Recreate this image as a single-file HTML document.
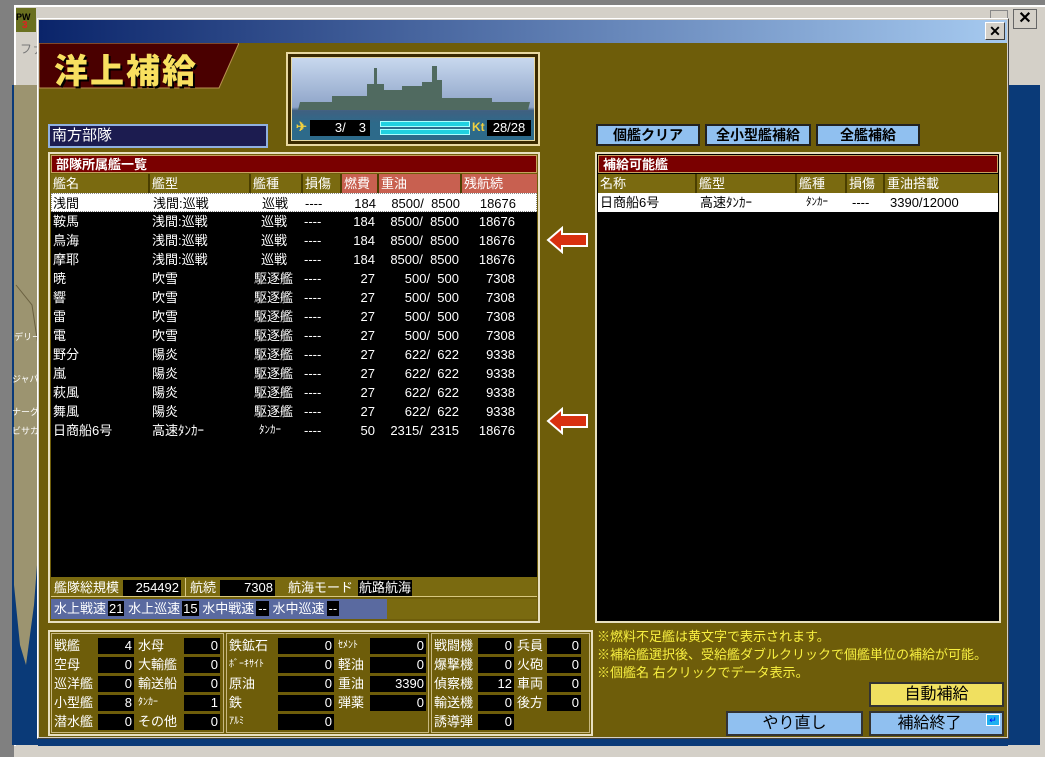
<!DOCTYPE html>
<html><head><meta charset="utf-8"><style>
*{margin:0;padding:0;box-sizing:border-box}
body{width:1045px;height:757px;overflow:hidden;background:#c0c0c0;font-family:"Liberation Sans","Noto Sans CJK JP",sans-serif;font-size:13px;position:relative;color:#fff}
.a{position:absolute}
.hdr{background:#7a0000;color:#fff;font-weight:bold;font-size:13px;line-height:17px;padding-left:4px;border:1px solid #c8a060}
.ch{background:#7a6a10;color:#fff;line-height:19px;padding-left:2px;border-right:2px solid #4a3e00;height:19px}
.cr{background:#c86050}
.row{position:absolute;left:0;height:19px;line-height:19px;width:100%;white-space:pre}
.row span{position:absolute;top:0}
.sel{background:#fff;color:#000;border:1px dotted #888}
.btn{background:#90c0f0;color:#000;border:2px solid #222;text-align:center;font-weight:bold}
.bx{position:absolute;background:#000;color:#fff;text-align:right;padding-right:2px;height:16px;line-height:16px}
.lb{position:absolute;line-height:16px;height:16px;white-space:nowrap}
.s{font-size:10px}
</style></head><body>
<div class="a" style="left:0;top:0;width:1045px;height:757px;background:#808080"></div>
<div class="a" style="left:14px;top:5px;width:1031px;height:752px;background:#d4d0c8;border-top:2px solid #fff;border-left:2px solid #fff"></div>
<div class="a" style="left:16px;top:8px;width:20px;height:24px;background:#6a7020"><span style="font-size:9px;font-weight:bold;color:#000">PW</span><span class="a" style="left:6px;top:12px;font-size:10px;font-weight:bold;color:#e02020">3</span></div>
<div class="a" style="left:20px;top:40px;color:#777;font-size:12px">ファ</div>
<div class="a" style="left:990px;top:10px;width:18px;height:18px;background:#d4d0c8;border:1px solid #888"></div>
<div class="a" style="left:1013px;top:9px;width:24px;height:20px;background:#d4d0c8;border:1px solid #666;color:#000;font-weight:bold;text-align:center;line-height:18px;font-size:16px">✕</div>
<div class="a" style="left:1008px;top:85px;width:32px;height:660px;background:#0a3a78"></div>
<svg class="a" style="left:12px;top:85px" width="28" height="660"><path d="M0 0H28V660H0z" fill="#0a3a78"/><path d="M2 0H28V440L22 520 14 580 8 560 2 500z" fill="#9c9470"/><path d="M4 200L20 220 26 260" stroke="#6a6040" fill="none"/></svg>
<div class="a" style="left:14px;top:330px;font-size:9px;color:#fff">デリー</div>
<div class="a" style="left:12px;top:372px;font-size:9px;color:#fff">ジャパ</div>
<div class="a" style="left:12px;top:405px;font-size:9px;color:#fff">ナーグ</div>
<div class="a" style="left:12px;top:424px;font-size:9px;color:#fff">ビサカ</div>
<div class="a" style="left:14px;top:746px;width:1031px;height:11px;background:#d4d0c8"></div>
<div class="a" style="left:38px;top:736px;width:970px;height:10px;background:#0a3a78"></div>

<div class="a" style="left:37px;top:18px;width:972px;height:721px;background:#d4d0c8;border:1px solid #fff;border-right-color:#404040;border-bottom-color:#404040"></div>
<div class="a" style="left:39px;top:20px;width:968px;height:23px;background:linear-gradient(90deg,#0a246a,#a6caf0)"></div>
<div class="a" style="left:985px;top:22px;width:20px;height:18px;background:#d4d0c8;border:1px solid #fff;border-right-color:#404040;border-bottom-color:#404040;color:#000;text-align:center;font-weight:bold;line-height:16px;font-size:14px">✕</div>
<div class="a" style="left:39px;top:43px;width:968px;height:694px;background:#6e5d0a"></div>

<svg class="a" style="left:39px;top:43px" width="200" height="46"><path d="M0 0H200L180 45H0z" fill="#4a0000" stroke="#b89050"/></svg>
<div class="a" style="left:54px;top:44px;font-size:34px;font-weight:900;color:#f8e060;letter-spacing:2px;text-shadow:2px 2px 0 #000;font-family:'Noto Sans CJK JP',sans-serif">洋上補給</div>

<div class="a" style="left:286px;top:52px;width:254px;height:94px;border:2px solid #e8d8a0;background:#3a2a00;padding:3px">
 <div style="width:100%;height:100%;border:1px solid #e8d8a0;background:linear-gradient(#c8d8ee,#8ea4c8 60%,#406080 64%,#2d6a8a 80%);position:relative">
  <svg class="a" style="left:0;top:0" width="244" height="60"><path d="M6 52H236L238 44H200V40H150V22H145V8H140V24H130V28H110V32H92V26H85V10H82V26H75V38H40V44H8z" fill="#506a60"/></svg>
  <div class="a" style="left:4px;top:61px;color:#f0d040;font-weight:bold">✈</div>
  <div class="a" style="left:18px;top:62px;width:60px;height:16px;background:#000;text-align:right;padding-right:4px;line-height:16px">3/　3</div>
  <div class="a" style="left:88px;top:63px;width:90px;height:6px;background:#20d0e0;border:1px solid #aff"></div>
  <div class="a" style="left:88px;top:71px;width:90px;height:6px;background:#20d0e0;border:1px solid #aff"></div>
  <div class="a" style="left:180px;top:62px;color:#f0d040;font-weight:bold;font-size:12px">Kt</div>
  <div class="a" style="left:195px;top:62px;width:44px;height:16px;background:#000;text-align:center;line-height:16px">28/28</div>
 </div>
</div>

<div class="a" style="left:48px;top:124px;width:220px;height:24px;background:#1c1c50;border:2px solid #90b0e0;line-height:20px;padding-left:2px;font-size:15px">南方部隊</div>

<div class="a btn" style="left:596px;top:124px;width:104px;height:22px;line-height:18px;font-size:14px">個艦クリア</div>
<div class="a btn" style="left:705px;top:124px;width:106px;height:22px;line-height:18px;font-size:14px">全小型艦補給</div>
<div class="a btn" style="left:816px;top:124px;width:104px;height:22px;line-height:18px;font-size:14px">全艦補給</div>

<div class="a" style="left:48px;top:152px;width:492px;height:471px;border:2px solid #e8e0c0;background:#6e5d0a"></div>
<div class="a hdr" style="left:51px;top:155px;width:486px;height:18px">部隊所属艦一覧</div>
<div class="a ch" style="left:51px;top:174px;width:99px">艦名</div>
<div class="a ch" style="left:150px;top:174px;width:101px">艦型</div>
<div class="a ch" style="left:251px;top:174px;width:52px">艦種</div>
<div class="a ch" style="left:303px;top:174px;width:39px">損傷</div>
<div class="a ch cr" style="left:342px;top:174px;width:37px">燃費</div>
<div class="a ch cr" style="left:379px;top:174px;width:83px">重油</div>
<div class="a ch cr" style="left:462px;top:174px;width:75px;border-right:0">残航続</div>
<div class="a" style="left:51px;top:193px;width:486px;height:384px;background:#000">
<div class="row sel" style="top:0"><span style="left:1px">浅間</span><span style="left:101px">浅間:巡戦</span><span style="left:210px">巡戦</span><span style="left:253px">----</span><span style="left:294px;width:30px;text-align:right">184</span><span style="left:330px;width:78px;text-align:right">8500/  8500</span><span style="left:420px;width:44px;text-align:right">18676</span></div>
<div class="row" style="top:19px"><span style="left:2px">鞍馬</span><span style="left:101px">浅間:巡戦</span><span style="left:210px">巡戦</span><span style="left:253px">----</span><span style="left:294px;width:30px;text-align:right">184</span><span style="left:330px;width:78px;text-align:right">8500/  8500</span><span style="left:420px;width:44px;text-align:right">18676</span></div>
<div class="row" style="top:38px"><span style="left:2px">鳥海</span><span style="left:101px">浅間:巡戦</span><span style="left:210px">巡戦</span><span style="left:253px">----</span><span style="left:294px;width:30px;text-align:right">184</span><span style="left:330px;width:78px;text-align:right">8500/  8500</span><span style="left:420px;width:44px;text-align:right">18676</span></div>
<div class="row" style="top:57px"><span style="left:2px">摩耶</span><span style="left:101px">浅間:巡戦</span><span style="left:210px">巡戦</span><span style="left:253px">----</span><span style="left:294px;width:30px;text-align:right">184</span><span style="left:330px;width:78px;text-align:right">8500/  8500</span><span style="left:420px;width:44px;text-align:right">18676</span></div>
<div class="row" style="top:76px"><span style="left:2px">暁</span><span style="left:101px">吹雪</span><span style="left:203px">駆逐艦</span><span style="left:253px">----</span><span style="left:294px;width:30px;text-align:right">27</span><span style="left:330px;width:78px;text-align:right">500/  500</span><span style="left:420px;width:44px;text-align:right">7308</span></div>
<div class="row" style="top:95px"><span style="left:2px">響</span><span style="left:101px">吹雪</span><span style="left:203px">駆逐艦</span><span style="left:253px">----</span><span style="left:294px;width:30px;text-align:right">27</span><span style="left:330px;width:78px;text-align:right">500/  500</span><span style="left:420px;width:44px;text-align:right">7308</span></div>
<div class="row" style="top:114px"><span style="left:2px">雷</span><span style="left:101px">吹雪</span><span style="left:203px">駆逐艦</span><span style="left:253px">----</span><span style="left:294px;width:30px;text-align:right">27</span><span style="left:330px;width:78px;text-align:right">500/  500</span><span style="left:420px;width:44px;text-align:right">7308</span></div>
<div class="row" style="top:133px"><span style="left:2px">電</span><span style="left:101px">吹雪</span><span style="left:203px">駆逐艦</span><span style="left:253px">----</span><span style="left:294px;width:30px;text-align:right">27</span><span style="left:330px;width:78px;text-align:right">500/  500</span><span style="left:420px;width:44px;text-align:right">7308</span></div>
<div class="row" style="top:152px"><span style="left:2px">野分</span><span style="left:101px">陽炎</span><span style="left:203px">駆逐艦</span><span style="left:253px">----</span><span style="left:294px;width:30px;text-align:right">27</span><span style="left:330px;width:78px;text-align:right">622/  622</span><span style="left:420px;width:44px;text-align:right">9338</span></div>
<div class="row" style="top:171px"><span style="left:2px">嵐</span><span style="left:101px">陽炎</span><span style="left:203px">駆逐艦</span><span style="left:253px">----</span><span style="left:294px;width:30px;text-align:right">27</span><span style="left:330px;width:78px;text-align:right">622/  622</span><span style="left:420px;width:44px;text-align:right">9338</span></div>
<div class="row" style="top:190px"><span style="left:2px">萩風</span><span style="left:101px">陽炎</span><span style="left:203px">駆逐艦</span><span style="left:253px">----</span><span style="left:294px;width:30px;text-align:right">27</span><span style="left:330px;width:78px;text-align:right">622/  622</span><span style="left:420px;width:44px;text-align:right">9338</span></div>
<div class="row" style="top:209px"><span style="left:2px">舞風</span><span style="left:101px">陽炎</span><span style="left:203px">駆逐艦</span><span style="left:253px">----</span><span style="left:294px;width:30px;text-align:right">27</span><span style="left:330px;width:78px;text-align:right">622/  622</span><span style="left:420px;width:44px;text-align:right">9338</span></div>
<div class="row" style="top:228px"><span style="left:2px">日商船6号</span><span style="left:101px">高速ﾀﾝｶｰ</span><span style="left:208px;font-size:11px">ﾀﾝｶｰ</span><span style="left:253px">----</span><span style="left:294px;width:30px;text-align:right">50</span><span style="left:330px;width:78px;text-align:right">2315/  2315</span><span style="left:420px;width:44px;text-align:right">18676</span></div>
</div>
<div class="a" style="left:51px;top:577px;width:486px;height:20px;background:#7a6a10;border-bottom:1px solid #d8c880"></div>
<div class="lb" style="left:54px;top:580px">艦隊総規模</div>
<div class="bx" style="left:123px;top:580px;width:58px">254492</div>
<div class="a" style="left:185px;top:578px;width:1px;height:18px;background:#d8c880"></div>
<div class="lb" style="left:190px;top:580px">航続</div>
<div class="bx" style="left:220px;top:580px;width:55px">7308</div>
<div class="lb" style="left:288px;top:580px">航海モード</div>
<div class="a" style="left:358px;top:580px;height:16px;line-height:16px;background:#000;padding:0 1px">航路航海</div>
<div class="a" style="left:51px;top:599px;width:486px;height:20px;background:#7a6a10"></div>
<div class="a" style="left:51px;top:599px;width:336px;height:20px;background:#5a6aa0"></div>
<div class="a" style="left:54px;top:601px;line-height:16px;white-space:nowrap">水上戦速<span style="background:#000;padding:0 1px;margin-left:2px">21</span> 水上巡速<span style="background:#000;padding:0 1px;margin-left:2px">15</span> 水中戦速<span style="background:#000;padding:0 2px;margin-left:2px">--</span> 水中巡速<span style="background:#000;padding:0 2px;margin-left:2px">--</span></div>

<svg class="a" style="left:546px;top:226px" width="44" height="28"><path d="M2 14L16 2V8H41V20H16V26z" fill="#d83010" stroke="#fff" stroke-width="2"/></svg>
<svg class="a" style="left:546px;top:407px" width="44" height="28"><path d="M2 14L16 2V8H41V20H16V26z" fill="#d83010" stroke="#fff" stroke-width="2"/></svg>

<div class="a" style="left:595px;top:152px;width:406px;height:471px;border:2px solid #e8e0c0;background:#000"></div>
<div class="a hdr" style="left:598px;top:155px;width:400px;height:18px">補給可能艦</div>
<div class="a ch" style="left:598px;top:174px;width:99px">名称</div>
<div class="a ch" style="left:697px;top:174px;width:100px">艦型</div>
<div class="a ch" style="left:797px;top:174px;width:50px">艦種</div>
<div class="a ch" style="left:847px;top:174px;width:38px">損傷</div>
<div class="a ch" style="left:885px;top:174px;width:113px;border-right:0">重油搭載</div>
<div class="row" style="left:598px;top:193px;width:400px;background:#fff;color:#000"><span style="left:2px">日商船6号</span><span style="left:102px">高速ﾀﾝｶｰ</span><span style="left:208px;font-size:11px">ﾀﾝｶｰ</span><span style="left:254px">----</span><span style="left:292px">3390/12000</span></div>

<div class="a" style="left:597px;top:628px;color:#f8f040;font-size:13px;line-height:18px">※燃料不足艦は黄文字で表示されます。<br>※補給艦選択後、受給艦ダブルクリックで個艦単位の補給が可能。<br>※個艦名 右クリックでデータ表示。</div>

<div class="a btn" style="left:869px;top:682px;width:135px;height:25px;background:#f0e060;line-height:21px;font-size:16px;font-weight:normal;border-color:#333">自動補給</div>
<div class="a btn" style="left:726px;top:711px;width:137px;height:25px;line-height:21px;font-size:16px;font-weight:normal;border-color:#333">やり直し</div>
<div class="a btn" style="left:869px;top:711px;width:135px;height:25px;line-height:21px;font-size:16px;font-weight:normal;border-color:#333;padding-right:14px">補給終了</div>
<div class="a" style="left:986px;top:714px;width:14px;height:12px;background:#20b0f0;border:1px solid #fff;color:#00f;font-size:9px;line-height:10px;text-align:center">↵</div>

<div class="a" style="left:48px;top:630px;width:545px;height:106px;border:2px solid #e8e0c0;background:#6e5d0a"></div>
<div class="a" style="left:51px;top:633px;width:173px;height:100px;border:1px solid #c8b880"></div>
<div class="a" style="left:226px;top:633px;width:203px;height:100px;border:1px solid #c8b880"></div>
<div class="a" style="left:431px;top:633px;width:159px;height:100px;border:1px solid #c8b880"></div>

<div class="lb" style="left:54px;top:638px">戦艦</div><div class="bx" style="left:98px;top:638px;width:36px">4</div>
<div class="lb" style="left:54px;top:657px">空母</div><div class="bx" style="left:98px;top:657px;width:36px">0</div>
<div class="lb" style="left:54px;top:676px">巡洋艦</div><div class="bx" style="left:98px;top:676px;width:36px">0</div>
<div class="lb" style="left:54px;top:695px">小型艦</div><div class="bx" style="left:98px;top:695px;width:36px">8</div>
<div class="lb" style="left:54px;top:714px">潜水艦</div><div class="bx" style="left:98px;top:714px;width:36px">0</div>
<div class="lb" style="left:138px;top:638px">水母</div><div class="bx" style="left:184px;top:638px;width:36px">0</div>
<div class="lb" style="left:138px;top:657px">大輸艦</div><div class="bx" style="left:184px;top:657px;width:36px">0</div>
<div class="lb" style="left:138px;top:676px">輸送船</div><div class="bx" style="left:184px;top:676px;width:36px">0</div>
<div class="lb s" style="left:138px;top:695px">ﾀﾝｶｰ</div><div class="bx" style="left:184px;top:695px;width:36px">1</div>
<div class="lb" style="left:138px;top:714px">その他</div><div class="bx" style="left:184px;top:714px;width:36px">0</div>

<div class="lb" style="left:229px;top:638px">鉄鉱石</div><div class="bx" style="left:278px;top:638px;width:56px">0</div>
<div class="lb s" style="left:229px;top:657px">ﾎﾞｰｷｻｲﾄ</div><div class="bx" style="left:278px;top:657px;width:56px">0</div>
<div class="lb" style="left:229px;top:676px">原油</div><div class="bx" style="left:278px;top:676px;width:56px">0</div>
<div class="lb" style="left:229px;top:695px">鉄</div><div class="bx" style="left:278px;top:695px;width:56px">0</div>
<div class="lb s" style="left:229px;top:714px">ｱﾙﾐ</div><div class="bx" style="left:278px;top:714px;width:56px">0</div>
<div class="lb s" style="left:338px;top:638px">ｾﾒﾝﾄ</div><div class="bx" style="left:370px;top:638px;width:56px">0</div>
<div class="lb" style="left:338px;top:657px">軽油</div><div class="bx" style="left:370px;top:657px;width:56px">0</div>
<div class="lb" style="left:338px;top:676px">重油</div><div class="bx" style="left:370px;top:676px;width:56px">3390</div>
<div class="lb" style="left:338px;top:695px">弾薬</div><div class="bx" style="left:370px;top:695px;width:56px">0</div>

<div class="lb" style="left:434px;top:638px">戦闘機</div><div class="bx" style="left:478px;top:638px;width:36px">0</div>
<div class="lb" style="left:434px;top:657px">爆撃機</div><div class="bx" style="left:478px;top:657px;width:36px">0</div>
<div class="lb" style="left:434px;top:676px">偵察機</div><div class="bx" style="left:478px;top:676px;width:36px">12</div>
<div class="lb" style="left:434px;top:695px">輸送機</div><div class="bx" style="left:478px;top:695px;width:36px">0</div>
<div class="lb" style="left:434px;top:714px">誘導弾</div><div class="bx" style="left:478px;top:714px;width:36px">0</div>
<div class="lb" style="left:517px;top:638px">兵員</div><div class="bx" style="left:547px;top:638px;width:34px">0</div>
<div class="lb" style="left:517px;top:657px">火砲</div><div class="bx" style="left:547px;top:657px;width:34px">0</div>
<div class="lb" style="left:517px;top:676px">車両</div><div class="bx" style="left:547px;top:676px;width:34px">0</div>
<div class="lb" style="left:517px;top:695px">後方</div><div class="bx" style="left:547px;top:695px;width:34px">0</div>
</body></html>
